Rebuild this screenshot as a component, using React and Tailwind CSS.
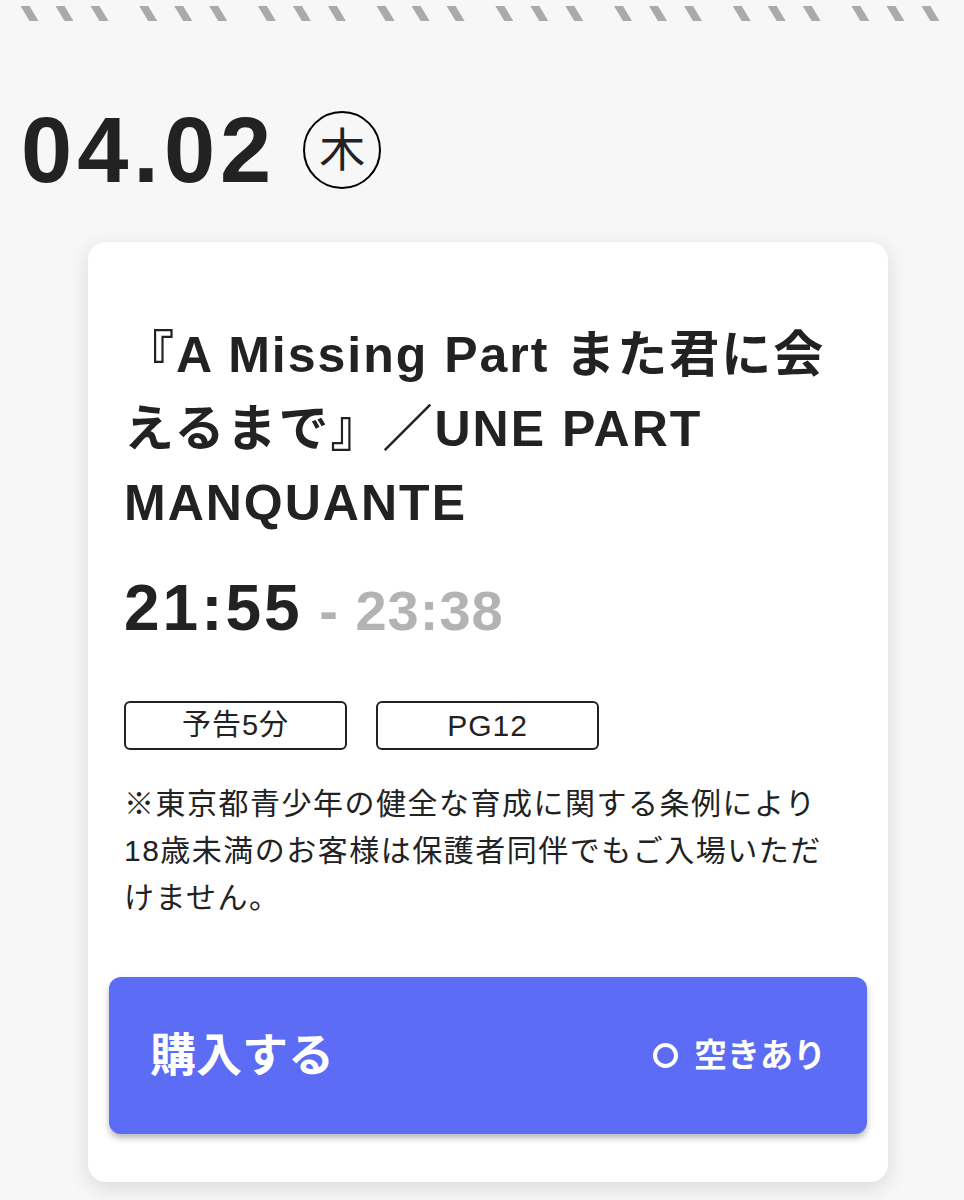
import React from "react";

const FONT = { fontFamily: '"Liberation Sans", "Noto Sans CJK JP", sans-serif' };

// three slashes per group across the top edge
const groups = [0, 1, 2, 3, 4, 5, 6, 7];

function Stripes() {
  return (
    <svg width="964" height="30" viewBox="0 0 964 30" className="block">
      {groups.map((g) =>
        [0, 35, 70].map((off) => {
          const x = 20.5 + g * 118.7 + off;
          return (
            <polygon
              key={`${g}-${off}`}
              points={`${x},6 ${x + 9},6 ${x + 18},21 ${x + 9},21`}
              fill="#aaaaaa"
            />
          );
        })
      )}
    </svg>
  );
}

export default function App() {
  return (
    <div className="min-h-[1200px] bg-[#f7f7f7] text-[#222]" style={FONT}>
      <Stripes />

      {/* date */}
      <div className="mt-[80px] h-[80px] pl-[21px] flex items-center">
        <span className="text-[92px] leading-none font-bold tracking-[5px]">04.02</span>
        <span className="ml-[27px] w-[78px] h-[78px] rounded-full border-[2.5px] border-black flex items-center justify-center text-[46px] leading-none">
          木
        </span>
      </div>

      {/* showing card */}
      <div className="mt-[52px] ml-[88px] w-[800px] rounded-[18px] bg-white shadow-[0_6px_22px_rgba(0,0,0,0.12)] px-[21px] pt-[76px] pb-[48px]">
        <div className="px-[15px]">
          <h2 className="text-[50px] leading-[74px] font-bold tracking-[2px]">
            『A Missing Part また君に会
            <br />
            えるまで』／UNE PART
            <br />
            MANQUANTE
          </h2>

          <div className="mt-[36px] text-[64px] leading-none font-bold tracking-[3px]">
            21:55
            <span className="text-[56px] text-[#b3b3b3] tracking-[1px]"> - 23:38</span>
          </div>

          <div className="mt-[61px] flex gap-[29px]">
            <span className="w-[223px] h-[49px] rounded-[6px] border-2 border-[#222] flex items-center justify-center text-[29px] tracking-[1px]">
              予告5分
            </span>
            <span className="w-[223px] h-[49px] rounded-[6px] border-2 border-[#222] flex items-center justify-center text-[30px] tracking-[1px]">
              PG12
            </span>
          </div>

          <p className="mt-[30px] text-[30px] leading-[47px] tracking-[1.5px]">
            ※東京都青少年の健全な育成に関する条例により
            <br />
            18歳未満のお客様は保護者同伴でもご入場いただ
            <br />
            けません。
          </p>
        </div>

        <button className="mt-[56px] w-full h-[157px] rounded-[12px] bg-[#5c6cf4] shadow-[0_4px_6px_rgba(0,0,0,0.28)] px-[41px] flex items-center justify-between text-white">
          <span className="text-[46px] font-bold">購入する</span>
          <span className="flex items-center gap-[16px]">
            <span className="w-[25px] h-[25px] rounded-full border-[4px] border-white" />
            <span className="text-[33px] font-bold">空きあり</span>
          </span>
        </button>
      </div>
    </div>
  );
}
